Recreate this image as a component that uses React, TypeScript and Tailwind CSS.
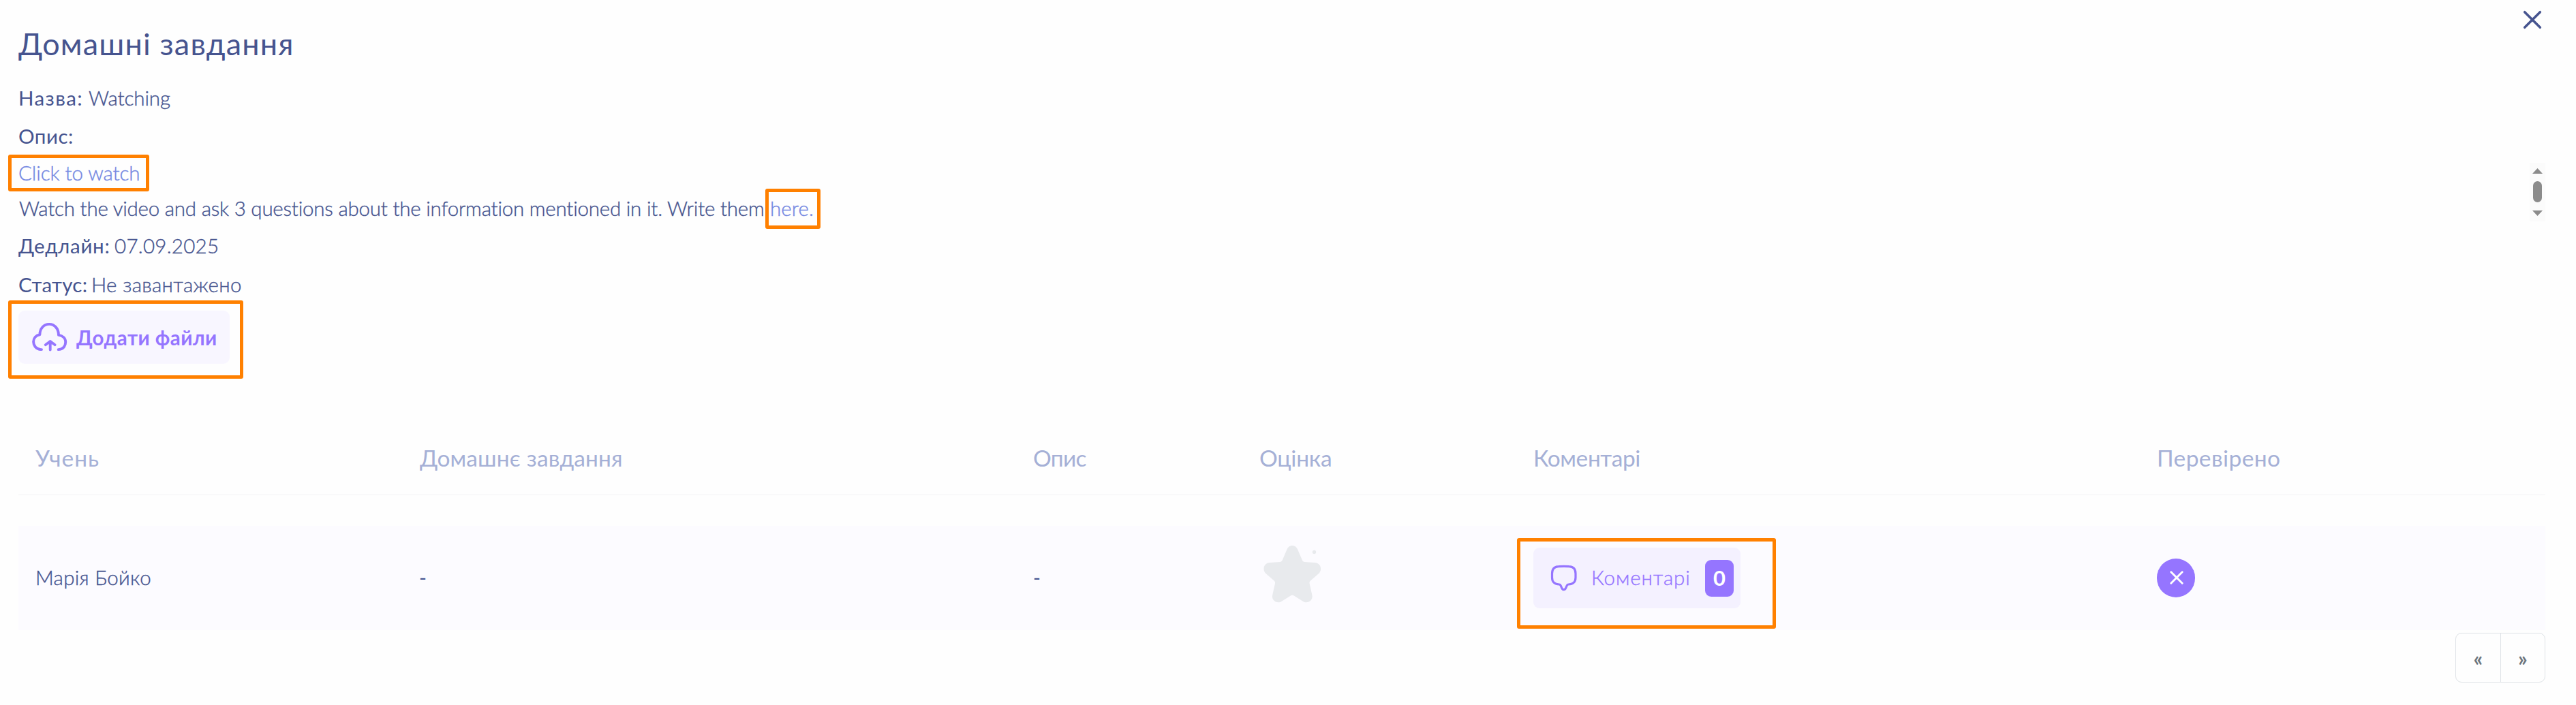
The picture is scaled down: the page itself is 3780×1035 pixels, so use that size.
import type { ReactNode } from 'react';

const thin = 'font-light [-webkit-text-stroke:0.4px_currentColor]';

function Highlight({ className }: { className: string }) {
  return <span className={`pointer-events-none absolute rounded-[3px] border-[5px] border-[#ff8000] ${className}`} />;
}

function Label({ className, children }: { className: string; children: ReactNode }) {
  return <span className={`font-normal ${className}`}>{children}</span>;
}

function CloudIcon() {
  return (
    <svg className="ml-[19px] h-[46px] w-[54px] shrink-0" viewBox="10 12 54 46" fill="none" stroke="#9575ff" strokeWidth="3.9" strokeLinecap="round" strokeLinejoin="round">
      <path d="M25 53.1h-1.2C17.8 52.6 13.1 48 13.1 41.8c0-5.4 3.8-9.8 9.3-10.6C22.5 22.5 28.2 15.9 36.2 15.9S49.9 22.5 50 31.9c6.5.9 10.200 4.800 10.200 10.300 0 6-4 10.700-10.500 10.900" />
      <path d="M37.700 53.500V42M30.800 46.200l6.900-5.100 6.900 5.100" />
    </svg>
  );
}

function BubbleIcon() {
  return (
    <svg className="ml-[25px] h-[40px] w-[40px] shrink-0" viewBox="36 28 40 40" fill="none" stroke="#9575ff" strokeWidth="3.2" strokeLinejoin="round">
      <path d="M49 57c-6.500 0-10.500-3.500-10.500-10V41c0-6.500 3-10 9.500-10.300 5-.4 10.500-.4 15.500 0C70 31 73 34.500 73 41v6c0 6.500-4 10-10.500 10-1 0-1.700.3-2.100 1.300l-1.900 4.300c-1.200 2.800-4.400 2.800-5.600 0L51 58.300C50.600 57.300 50 57 49 57z" />
    </svg>
  );
}

function StarIcon() {
  return (
    <svg className="ml-[-4px] mt-[-7px] block h-[110px] w-[110px]" viewBox="4 0 110 110" fill="#e8eaed">
      <path d="M56.300 11c3.700 0 6.600 2.300 8 6l6.300 14.800c.8 2 1.600 2.900 3.600 3.100L89.500 35.900c5 .2 8.600 4.200 8.600 9 0 3-1.100 5.300-3.600 7.700L83 62.500c-1.300 1.200-1.700 2.300-1.400 4L85.500 84c1 5.500-3.200 10.200-8.700 10.200-1.800 0-3.300-.5-5-1.500L58.300 84.300c-1.400-.9-2.600-.9-4 0L40.800 92.700c-1.700 1-3.200 1.500-5 1.500-5.500 0-9.700-4.700-8.700-10.200L31 66.500c.3-1.700-.1-2.800-1.400-4L18.100 52.600c-2.500-2.400-3.600-4.700-3.600-7.700 0-4.800 3.600-8.800 8.600-9l15.300-1c2-.2 2.800-1.100 3.600-3.100L48.300 17c1.400-3.700 4.300-6 8-6z" />
      <circle cx="88.500" cy="20.500" r="2.700" />
    </svg>
  );
}

const grid = 'grid grid-cols-[563px_901px_332px_401px_916px_1fr] pl-[25px]';

export default function App() {
  return (
    <main className="relative h-[1035px] w-[3780px] overflow-hidden bg-[#fefefe] pl-[27px] pr-[45px] font-['Lato','Open_Sans',sans-serif] text-[29.5px] text-[#46548f]">
      <header className="flex h-[114px] items-start justify-between">
        <h1 className="mt-[37px] text-[45px] font-normal leading-[54px] tracking-[1.15px]">Домашні завдання</h1>
        <button className="mr-[5px] mt-[15px]" aria-label="Закрити">
          <svg className="block h-[28px] w-[28px]" viewBox="0 0 28 28" stroke="#46548f" strokeWidth="3.6" strokeLinecap="round">
            <path d="M2.700 2.700l22.600 22.600M25.300 2.700L2.700 25.300" />
          </svg>
        </button>
      </header>

      <div className="flex h-[57px] items-center whitespace-nowrap pt-[3px]">
        <Label className="w-[103px] tracking-[1.4px]">Назва:</Label>
        <span className={`${thin} tracking-[-0.09px]`}>Watching</span>
      </div>
      <div className="flex h-[57px] items-center pt-[2px]">
        <Label className="tracking-[0.5px]">Опис:</Label>
      </div>

      <section className="flex justify-between">
        <div className="whitespace-nowrap">
          <div className="relative flex h-[52px] items-center">
            <a className={`${thin} tracking-[-0.08px] text-[#7488e2]`}>Click to watch</a>
            <Highlight className="left-[-15px] top-[-1px] h-[54px] w-[207px]" />
          </div>
          <div className="relative flex h-[52px] items-center">
            <p className={`${thin} ml-px w-[1102px] tracking-[-0.22px]`}>
              Watch the video and ask 3 questions about the information mentioned in it. Write them
            </p>
            <a className={`${thin} tracking-[0.1px] text-[#7488e2]`}>here.</a>
            <Highlight className="left-[1096px] top-[-3px] h-[59px] w-[81px]" />
          </div>
        </div>
        <div className="mt-[11px] flex h-[86px] w-[23px] flex-col items-center bg-[#fbfbfb]">
          <svg className="mt-[8px] h-[8px] w-[15px]" viewBox="0 0 15 8" fill="#8b8b8b"><path d="M7.500 0L15 8H0z" /></svg>
          <span className="mt-[11px] h-[31px] w-[13px] rounded-full bg-[#8b8b8b]" />
          <svg className="mt-[12px] h-[8px] w-[15px]" viewBox="0 0 15 8" fill="#8b8b8b"><path d="M0 0h15L7.500 8z" /></svg>
        </div>
      </section>

      <div className="flex h-[57px] items-center whitespace-nowrap pt-[2px]">
        <Label className="w-[141px] tracking-[0.7px]">Дедлайн:</Label>
        <span className={`${thin} tracking-[0.27px]`}>07.09.2025</span>
      </div>
      <div className="flex h-[55px] items-center whitespace-nowrap pt-[3px]">
        <Label className="w-[107px] tracking-[0.3px]">Статус:</Label>
        <span className={`${thin} tracking-[0.32px]`}>Не завантажено</span>
      </div>

      <div className="relative mt-[12px] h-[78px]">
        <button className="flex h-[78px] w-[310px] items-center rounded-[9px] bg-[#f8f6ff] text-[#9575ff]">
          <CloudIcon />
          <span className="ml-[12px] mt-[2px] whitespace-nowrap font-bold tracking-[0.47px]">Додати файли</span>
        </button>
        <Highlight className="left-[-15px] top-[-15px] h-[115px] w-[345px]" />
      </div>

      <section className="mt-[84px]">
        <div className={`${grid} h-[109px] items-center whitespace-nowrap border-b border-[#f3f3f6] text-[33.5px] text-[#a5b0d6]`}>
          <span className="tracking-[0.98px]">Учень</span>
          <span className="ml-px tracking-[0.13px]">Домашнє завдання</span>
          <span className="tracking-[-0.71px]">Опис</span>
          <span className="tracking-[-0.19px]">Оцінка</span>
          <span className="ml-px tracking-[-0.4px]">Коментарі</span>
          <span className="tracking-[0.42px]">Перевірено</span>
        </div>
        <div className={`${grid} relative mt-[45px] h-[153px] items-center whitespace-nowrap bg-[#fcfbff]`}>
          <span className={`${thin} mt-[-1px] tracking-[0.3px]`}>Марія Бойко</span>
          <span>-</span>
          <span>-</span>
          <StarIcon />
          <div className="relative">
            <button className="ml-px flex h-[89px] w-[304px] items-center rounded-[9px] bg-[#f4f1ff] text-[#9575ff]">
              <BubbleIcon />
              <span className={`${thin} ml-[20px] w-[167px] text-left tracking-[0.85px]`}>Коментарі</span>
              <span className="flex h-[54px] w-[42px] items-center justify-center rounded-[9px] bg-[#9575ff] text-[31px] font-bold text-white">0</span>
            </button>
            <Highlight className="left-[-23px] top-[-14px] h-[133px] w-[380px]" />
          </div>
          <span className="flex h-[57px] w-[56px] items-center justify-center rounded-full bg-[#9575ff]">
            <svg className="ml-[2px] mt-[-2px] h-[20px] w-[20px]" viewBox="0 0 20 20" stroke="#fff" strokeWidth="2.900" strokeLinecap="round">
              <path d="M1.800 1.800l16.400 16.400M18.200 1.800L1.800 18.200" />
            </svg>
          </span>
        </div>
      </section>

      <nav className="ml-auto mt-[4px] flex h-[73px] w-[132px] divide-x divide-[#dee2e6] rounded-[9px] border border-[#dee2e6] font-bold leading-[66px] text-[#6c757d]">
        <button className="flex-1 text-[30px]">«</button>
        <button className="flex-1 text-[30px]">»</button>
      </nav>
    </main>
  );
}
